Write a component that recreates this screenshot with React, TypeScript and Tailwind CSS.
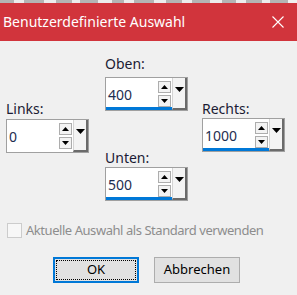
import React from 'react'

const font = { fontFamily: '"Noto Sans", "Open Sans", sans-serif' }

function Spin({ up }: { up: boolean }) {
  return (
    <div className="w-[13px] h-[12px] border border-[#adadad] bg-[#f3f3f3] flex items-center justify-center">
      <svg width="7" height="4" viewBox="0 0 7 4">
        {up ? <polygon points="0,4 7,4 3.5,0" fill="#000" /> : <polygon points="0,0 7,0 3.5,4" fill="#000" />}
      </svg>
    </div>
  )
}

function NumField({ label, value, focused, labelGap }: { label: string; value: string; focused?: boolean; labelGap: string }) {
  return (
    <div className="flex flex-col">
      <div className={`h-[18px] leading-[18px] text-[14px] text-[#1b1b34] ${labelGap}`}>{label}</div>
      <div className="w-[83px] h-[34px] border border-[#a0a0a0] bg-white flex">
        <div className={`flex-1 flex ${focused ? 'border-b-[3px] border-[#0078d7]' : 'border-b-[3px] border-white'}`}>
          <div className="flex-1 flex items-center pl-[2px] pt-[3px] text-[14px] text-[#1e2d50]">{value}</div>
          <div className="flex flex-col gap-[2px] pt-[3px] pr-[1px]">
            <Spin up />
            <Spin up={false} />
          </div>
        </div>
        <div className="w-[15px] bg-[#f4f4f4] border-l border-[#d4d4d4] border-r-2 border-b-2 border-r-[#6b6b6b] border-b-[#6b6b6b] flex justify-center pt-[9px]">
          <svg width="9" height="5" viewBox="0 0 9 5">
            <polygon points="0,0 9,0 4.5,5" fill="#000" />
          </svg>
        </div>
      </div>
    </div>
  )
}

export default function App() {
  const stripe = [14, 10, 20, 12, 16, 8, 18, 14, 12, 10, 20, 12, 16, 10, 18, 12, 14, 10, 16, 8, 18]
  return (
    <div className="w-[297px] h-[295px] bg-[#f0f0f0] overflow-hidden" style={font}>
      <div className="h-[3px] flex">
        {stripe.map((w, i) => (
          <div key={i} style={{ width: w }} className={i % 2 === 0 ? 'bg-[#b4b4b4]' : 'bg-[#ececec]'} />
        ))}
      </div>
      <div className="h-[38px] bg-[#d1343c] flex items-center justify-between pl-[3px] pr-[13px]">
        <span className="text-white text-[14px] leading-none">Benutzerdefinierte Auswahl</span>
        <svg width="12" height="12" viewBox="0 0 12 12">
          <path d="M0.5 0.5 L11.5 11.5 M11.5 0.5 L0.5 11.5" stroke="#fff" strokeWidth="1.1" />
        </svg>
      </div>
      <div className="flex items-start">
        <div className="ml-[6px] pt-[59px]">
          <NumField label="Links:" value="0" labelGap="mb-[1px]" />
        </div>
        <div className="ml-[16px] pt-[14px]">
          <NumField label="Oben:" value="400" focused labelGap="mb-[4px]" />
          <div className="mt-[38px]">
            <NumField label="Unten:" value="500" focused labelGap="mb-0" />
          </div>
        </div>
        <div className="ml-[14px] pt-[59px]">
          <NumField label="Rechts:" value="1000" focused labelGap="mb-0" />
        </div>
      </div>
      <div className="flex items-center mt-[22px] pl-[7px]">
        <div className="w-[15px] h-[15px] border border-[#cccccc] bg-[#f7f7f7]" />
        <span className="ml-[4px] text-[13px] tracking-[-0.45px] whitespace-nowrap text-[#8d8d8d] leading-none">
          Aktuelle Auswahl als Standard verwenden
        </span>
      </div>
      <div className="flex mt-[19px] pl-[53px] gap-[15px]">
        <button className="w-[86px] h-[26px] bg-[#e1e1e1] border-2 border-[#0078d7] p-[1px] text-[13px] text-black">
          <div className="w-full h-full border border-dotted border-black flex items-center justify-center">OK</div>
        </button>
        <button className="w-[86px] h-[26px] bg-[#e1e1e1] border border-[#adadad] text-[13px] text-black flex items-center justify-center">
          Abbrechen
        </button>
      </div>
    </div>
  )
}
